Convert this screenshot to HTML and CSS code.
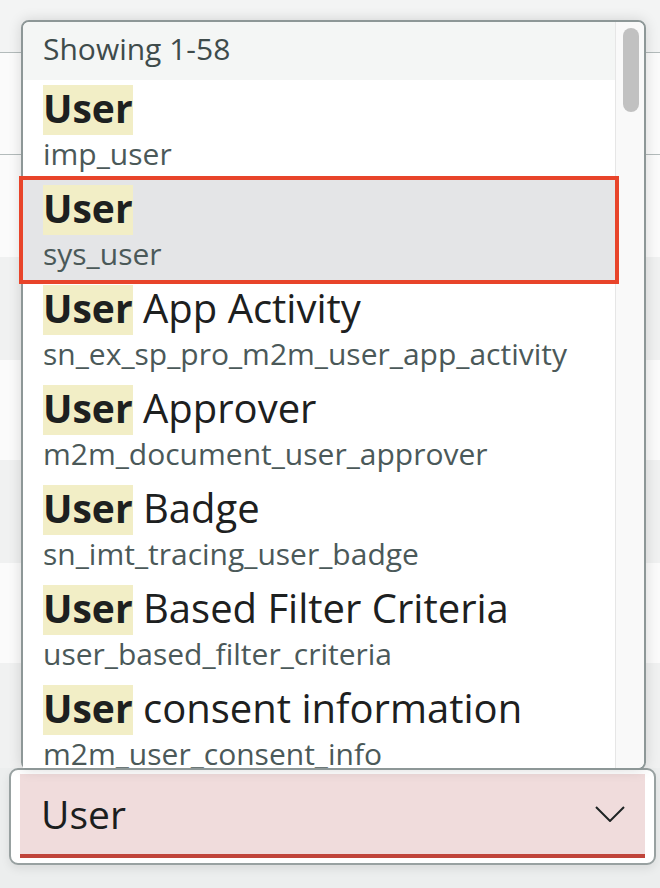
FILE: index.html
```html
<!DOCTYPE html>
<html lang="en">
<head>
<meta charset="utf-8">
<title>Table picker</title>
<link rel="stylesheet" href="styles.css">
</head>
<body>
<div class="page">
  <div class="bg-top"></div>
  <div class="bg-row bg-head"></div>
  <div class="bg-row r1"></div>
  <div class="bg-row r2 alt"></div>
  <div class="bg-row r3"></div>
  <div class="bg-row r4 alt"></div>
  <div class="bg-row r5"></div>
  <div class="bg-row r6 alt"></div>

  <div class="field">
    <div class="control">
      <span class="value">User</span>
      <svg class="chev" width="30" height="16" viewBox="0 0 30 16"><polyline points="1,1 15,15 29,1" fill="none" stroke="#1f2424" stroke-width="2"/></svg>
    </div>
  </div>

  <div class="dropdown">
    <div class="panel">
      <div class="header">Showing 1-58</div>
      <div class="item">
        <div class="title"><span class="hl">User</span></div>
        <div class="sub">imp_user</div>
      </div>
      <div class="item selected">
        <div class="title"><span class="hl">User</span></div>
        <div class="sub">sys_user</div>
      </div>
      <div class="item">
        <div class="title"><span class="hl">User</span> App Activity</div>
        <div class="sub">sn_ex_sp_pro_m2m_user_app_activity</div>
      </div>
      <div class="item">
        <div class="title"><span class="hl">User</span> Approver</div>
        <div class="sub">m2m_document_user_approver</div>
      </div>
      <div class="item">
        <div class="title"><span class="hl">User</span> Badge</div>
        <div class="sub">sn_imt_tracing_user_badge</div>
      </div>
      <div class="item">
        <div class="title"><span class="hl">User</span> Based Filter Criteria</div>
        <div class="sub">user_based_filter_criteria</div>
      </div>
      <div class="item">
        <div class="title"><span class="hl">User</span> consent information</div>
        <div class="sub">m2m_user_consent_info</div>
      </div>
    </div>
    <div class="scrollbar"><div class="thumb"></div></div>
  </div>
</div>
</body>
</html>
```

FILE: styles.css
```css
* { box-sizing: border-box; }
html, body { margin: 0; padding: 0; }
body {
  background: #eceeee;
  font-family: "Open Sans", Lato, sans-serif;
  font-variant-ligatures: none;
  width: 660px;
  height: 888px;
  overflow: hidden;
}
.page {
  position: relative;
  width: 660px;
  height: 888px;
  background: #eceeee;
}
.bg-top { height: 52px; background: #f3f4f4; }
.bg-row { background: #fbfbfb; }
.bg-row.alt { background: #f0f1f1; }
.bg-head {
  height: 103px;
  border-top: 1px solid #b3bbbb;
  border-bottom: 1px solid #b3bbbb;
}
.r1 { height: 102px; }
.r2 { height: 103px; }
.r3 { height: 100px; }
.r4 { height: 103px; }
.r5 { height: 100px; }
.r6 { height: 105px; }

.field {
  margin: 0 4px 0 9px;
  height: 97px;
  border: 2px solid #98a1a1;
  border-radius: 9px;
  background: #ffffff;
  padding: 4px 9px 5px 9px;
  box-shadow: 0 4px 10px rgba(0,0,0,0.08);
}
.control {
  height: 84px;
  background: #f0dcdc;
  border-bottom: 4px solid #c0443a;
  display: flex;
  align-items: center;
  justify-content: space-between;
  padding: 0 20px 0 21px;
}
.value {
  font-size: 39px;
  line-height: 80px;
  color: #1b1e1e;
}
.chev { display: block; }

.dropdown {
  position: absolute;
  left: 21px;
  top: 20px;
  width: 625px;
  height: 750px;
  border: 2px solid #8d9797;
  border-radius: 8px;
  background: #ffffff;
  display: flex;
  box-shadow: 0 0 14px rgba(0,0,0,0.14);
  z-index: 2;
}
.panel {
  flex: 1;
  display: flex;
  flex-direction: column;
  overflow-x: visible;
  overflow-y: clip;
  border-bottom-left-radius: 6px;
}
.header {
  flex: none;
  height: 58px;
  background: #f4f6f5;
  color: #3e4b4b;
  font-size: 30px;
  line-height: 53px;
  padding-left: 20px;
  border-top-left-radius: 6px;
}
.item {
  flex: none;
  height: 100px;
  padding: 5px 0 5px 20px;
  background: #ffffff;
}
.item.selected {
  background: #e4e5e7;
  outline: 4px solid #e8442a;
  outline-offset: 0;
  position: relative;
  z-index: 1;
}
.title {
  height: 50px;
  font-size: 40px;
  line-height: 46px;
  color: #1d2020;
  white-space: nowrap;
}
.hl {
  display: inline-block;
  background: #f2eec6;
  font-size: 39px;
  font-weight: 700;
  line-height: 46px;
  padding-bottom: 4px;
}
.sub {
  height: 40px;
  font-size: 30px;
  line-height: 37px;
  color: #4b5959;
  white-space: nowrap;
}
.scrollbar {
  flex: none;
  width: 29px;
  background: #f9f9f9;
  border-left: 1px solid #e6e6e6;
  border-top-right-radius: 6px;
  border-bottom-right-radius: 6px;
  padding: 6px 0 0 7px;
}
.thumb {
  width: 16px;
  height: 84px;
  border-radius: 8px;
  background: #c1c1c1;
}
```
